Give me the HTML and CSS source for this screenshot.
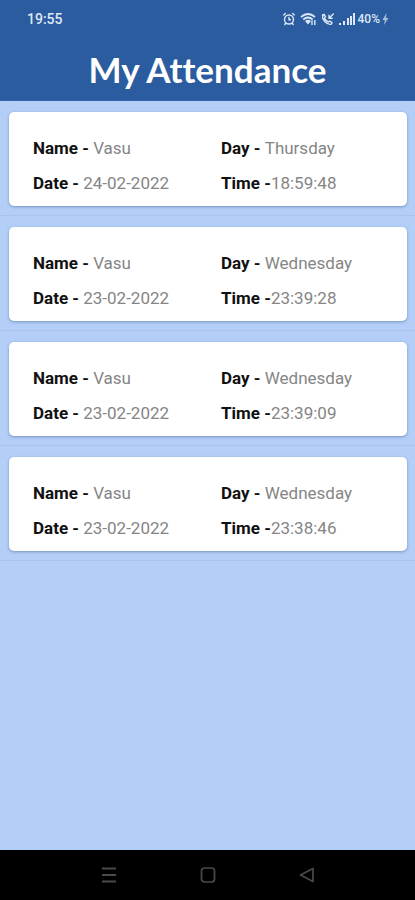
FILE: index.html
```html
<!DOCTYPE html>
<html lang="en">
<head>
<meta charset="utf-8">
<meta name="viewport" content="width=device-width, initial-scale=1">
<title>My Attendance</title>
<link rel="stylesheet" href="styles.css">
</head>
<body>
<header class="header">
  <div class="status">
    <span class="clock">19:55</span>
    <div class="indicators">
      <svg width="14" height="14" viewBox="0 0 14 14" fill="none" stroke="currentColor" stroke-width="1.4" stroke-linecap="round" aria-hidden="true"><circle cx="7" cy="7.500" r="4.500"/><path d="M7 5.500v2.200h1.500M1.800 3l1.500-1.400M12.200 3l-1.500-1.400M3.600 11.500l-.8 1M10.400 11.500l.8 1"/></svg>
      <svg width="17" height="14" viewBox="0 0 17 14" fill="none" stroke="currentColor" stroke-width="1.7" aria-hidden="true"><path d="M1 5q7-6 14 0M3.300 7.500q4.700-4 9.400 0"/><path d="M5 9q3-2.400 6 0l-3 3.500z" fill="currentColor" stroke="none"/><path d="M12 13V8.500M14.800 8v5" stroke-width="1.400"/></svg>
      <svg width="14" height="14" viewBox="0 0 14 14" fill="none" stroke="currentColor" stroke-width="1.400" stroke-linecap="round" stroke-linejoin="round" aria-hidden="true"><path d="M1.500 3l1.500-.7 1.500 2.400-1 1.400q1.200 2.800 3.900 3.900l1.400-1 2.200 1.600-.8 1.600Q7 13 3.800 9.500 1 6.200 1.500 3z"/><path d="M12.300 2L8 6.300M8 3.300v3h3.200"/></svg>
      <svg width="17" height="14" viewBox="0 0 17 14" fill="currentColor" aria-hidden="true"><path d="M0 11h2v2H0zM4 9h2v4H4zM8 6h2v7H8zM11 4h2v9h-2zM14 1h2v12h-2z"/></svg>
      <span class="battery">40%</span>
      <svg width="7" height="14" viewBox="0 0 7 14" fill="currentColor" opacity=".7" aria-hidden="true"><path d="M4.500 1L.5 8h2.300L2 13l4.500-7H4z"/></svg>
    </div>
  </div>
  <h1 class="title">My Attendance</h1>
</header>
<main class="content">
  <ul class="list">
    <li class="item"><article class="card">
      <p><b>Name - </b>Vasu</p><p><b>Day - </b>Thursday</p>
      <p><b>Date - </b>24-02-2022</p><p><b>Time -</b>18:59:48</p>
    </article></li>
    <li class="item"><article class="card">
      <p><b>Name - </b>Vasu</p><p><b>Day - </b>Wednesday</p>
      <p><b>Date - </b>23-02-2022</p><p><b>Time -</b>23:39:28</p>
    </article></li>
    <li class="item"><article class="card">
      <p><b>Name - </b>Vasu</p><p><b>Day - </b>Wednesday</p>
      <p><b>Date - </b>23-02-2022</p><p><b>Time -</b>23:39:09</p>
    </article></li>
    <li class="item"><article class="card">
      <p><b>Name - </b>Vasu</p><p><b>Day - </b>Wednesday</p>
      <p><b>Date - </b>23-02-2022</p><p><b>Time -</b>23:38:46</p>
    </article></li>
  </ul>
</main>
<nav class="navbar" aria-label="System">
  <button class="nav-button" type="button" aria-label="Recent apps"><svg width="16" height="16" viewBox="0 0 16 16" fill="none" stroke="currentColor" stroke-width="2"><path d="M1 1.500h14M1 8h14M1 14.500h14"/></svg></button>
  <button class="nav-button" type="button" aria-label="Home"><svg width="16" height="16" viewBox="0 0 16 16" fill="none" stroke="currentColor" stroke-width="1.700"><rect x="1.500" y="1" width="13" height="14" rx="3"/></svg></button>
  <button class="nav-button" type="button" aria-label="Back"><svg width="16" height="16" viewBox="0 0 16 16" fill="none" stroke="currentColor" stroke-width="1.700" stroke-linejoin="round"><path d="M1.500 8L14 1.500v13z"/></svg></button>
</nav>
</body>
</html>
```
FILE: styles.css
```css
* {
  box-sizing: border-box;
}

body {
  margin: 0;
  min-height: 100vh;
  display: flex;
  flex-direction: column;
  background: #b3cef7;
  color: #858585;
  font-family: Roboto, sans-serif;
  font-size: 17px;
}

.header {
  background: #2b5c9f;
  color: #fff;
  border-bottom: 1px solid #3465ad;
}

.status {
  display: flex;
  align-items: center;
  justify-content: space-between;
  height: 38px;
  padding: 0 26px 0 27px;
  color: #dce8f8;
}

.clock {
  font-size: 14px;
  font-weight: 500;
}

.indicators {
  display: flex;
  align-items: center;
  gap: 4px;
}

.battery {
  margin: 0 -2px 0 -2px;
  font-size: 12px;
  font-weight: 500;
}

.title {
  margin: 0;
  height: 62px;
  font-family: Lato, sans-serif;
  font-size: 35px;
  font-weight: 700;
  font-variant-ligatures: none;
  line-height: 62px;
  text-align: center;
}

.content {
  flex: 1;
}

.list {
  margin: 0;
  padding: 0;
  list-style: none;
}

.item {
  padding: 11px 8px 9px 9px;
  border-bottom: 1px solid #a8c3ec;
}

.card {
  display: grid;
  grid-template-columns: 188px 1fr;
  padding: 19px 24px 5px;
  border-radius: 5px;
  background: #fff;
  box-shadow: 0 1px 3px #7593c2;
}

.card p {
  margin: 0;
  line-height: 35px;
  white-space: nowrap;
}

.card b {
  color: #111;
  font-weight: 700;
}

.navbar {
  display: flex;
  align-items: center;
  justify-content: center;
  height: 50px;
  background: #000;
}

.nav-button {
  display: flex;
  align-items: center;
  justify-content: center;
  width: 99px;
  height: 50px;
  padding: 0;
  border: 0;
  background: none;
  color: #4a4a4a;
}
```
